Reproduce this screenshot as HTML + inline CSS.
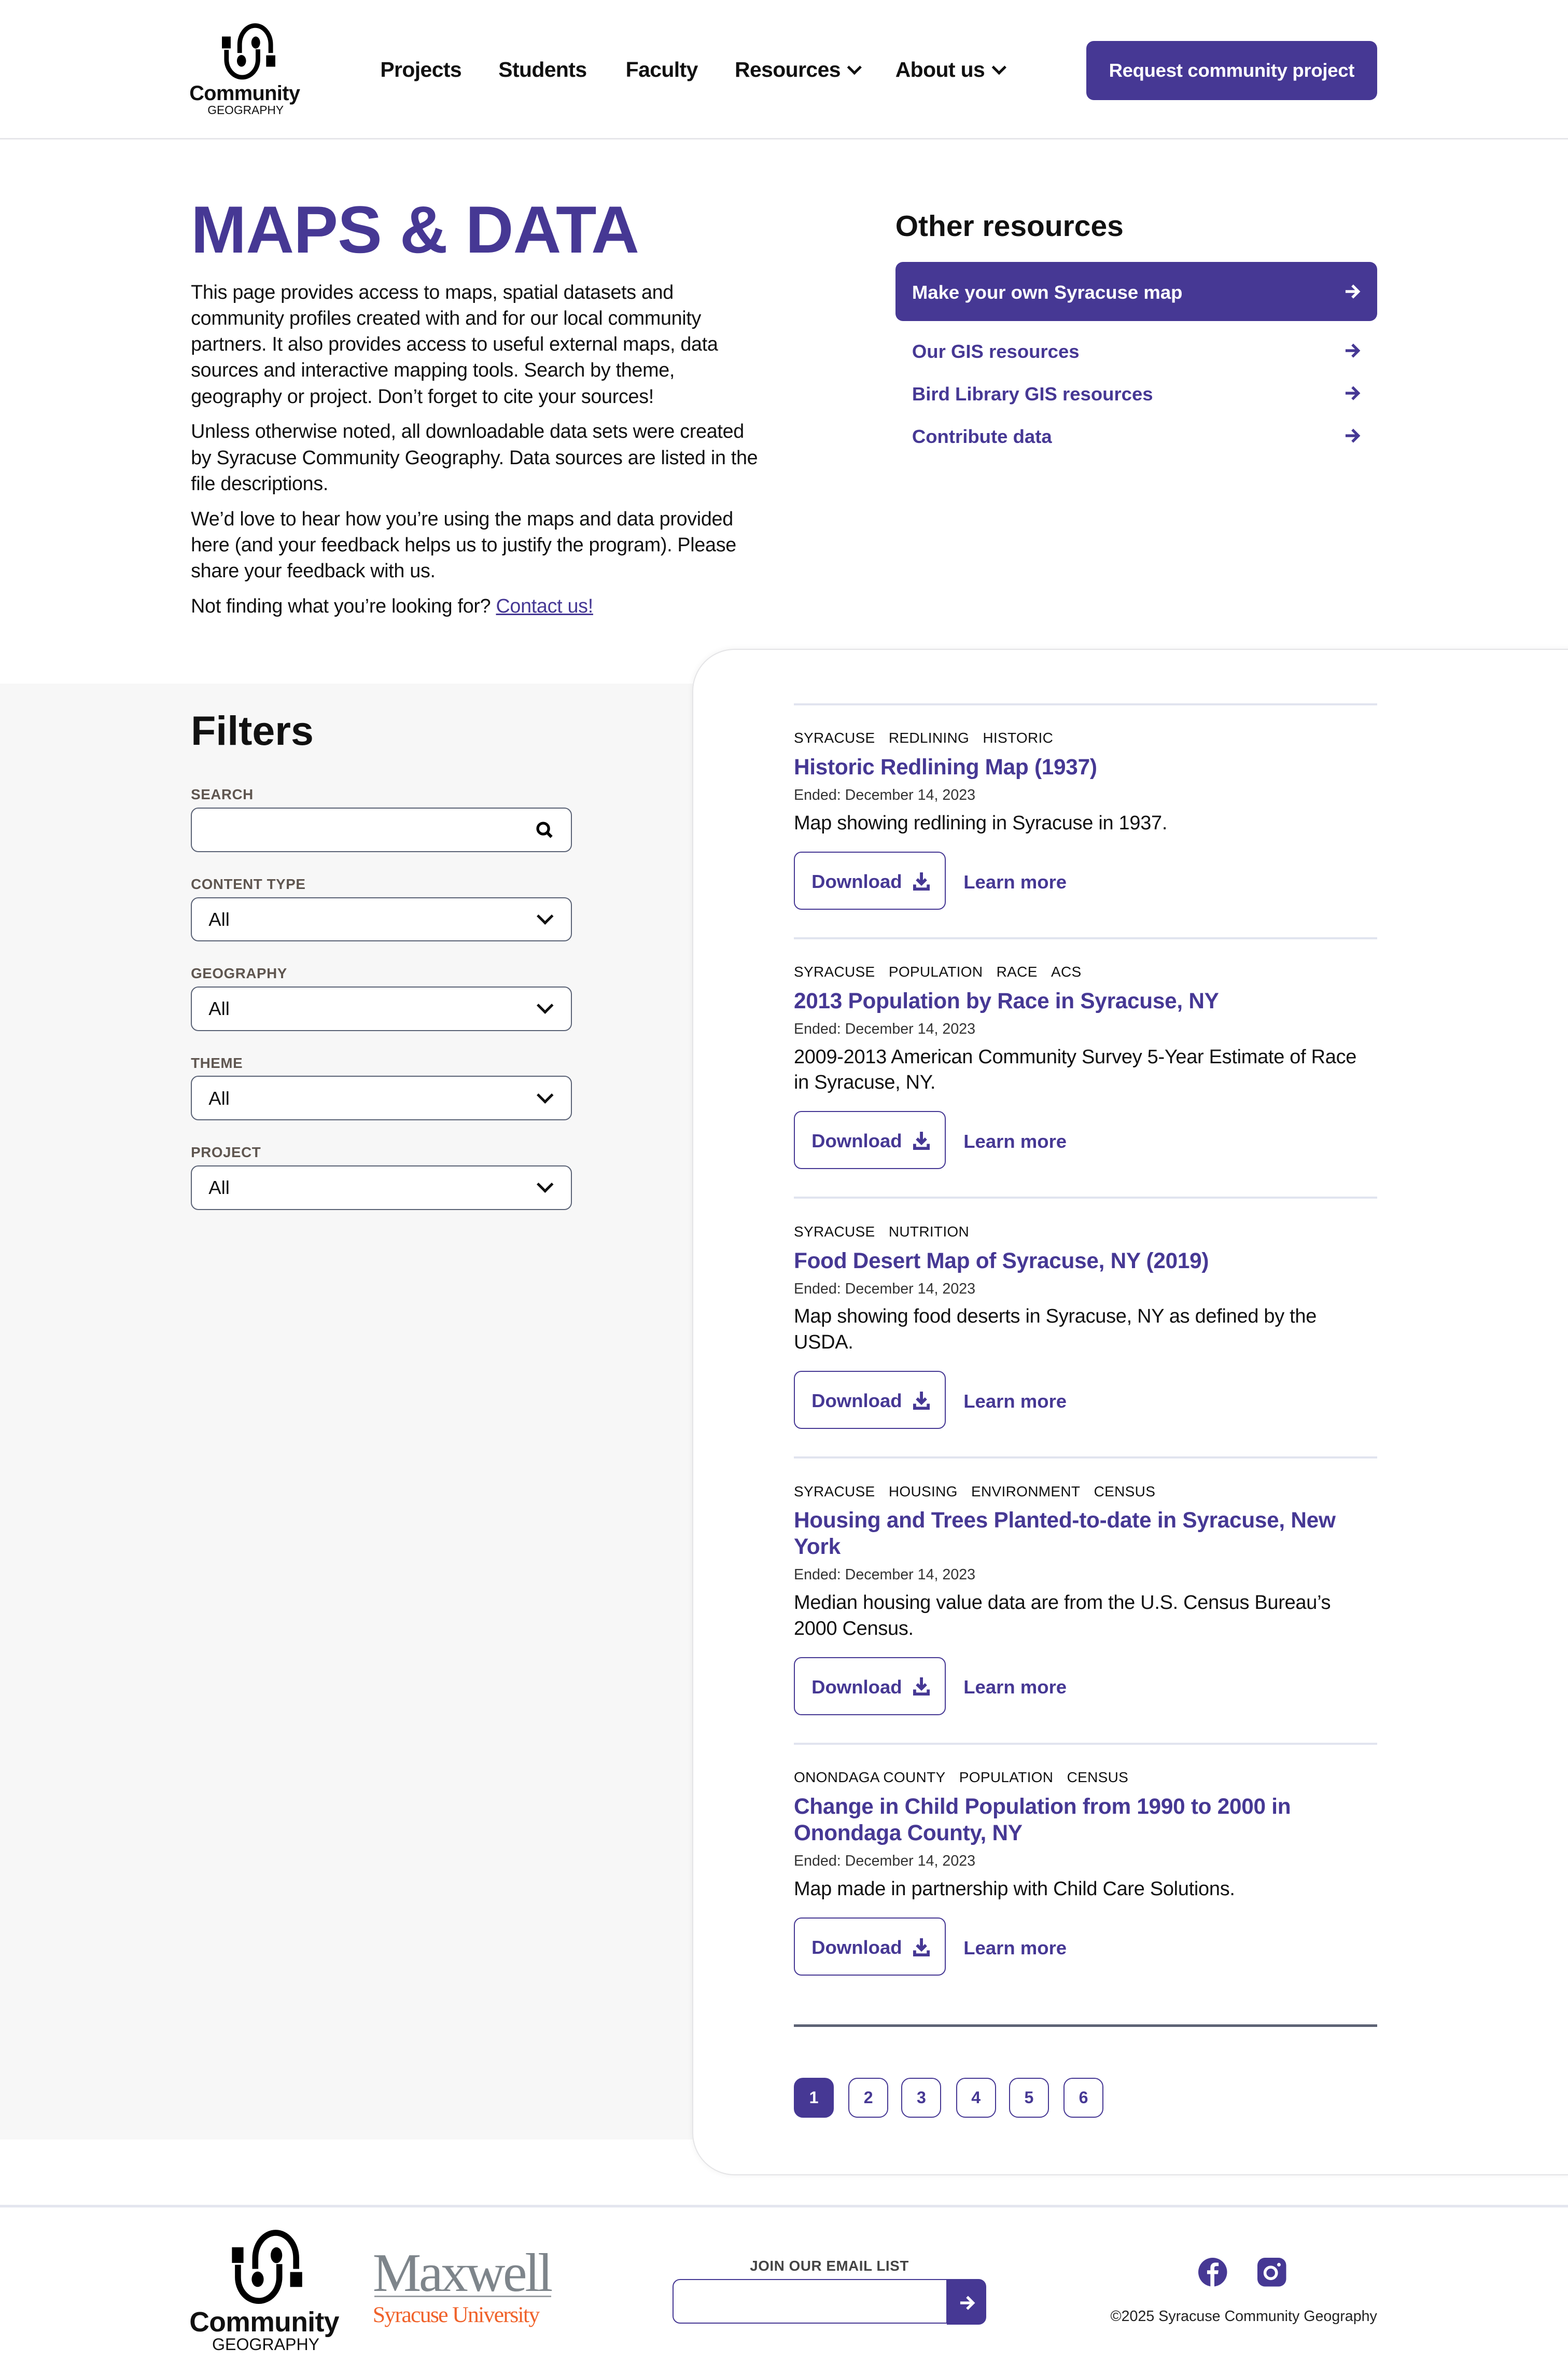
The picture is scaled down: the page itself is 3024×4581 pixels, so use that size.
<!DOCTYPE html>
<html><head><meta charset="utf-8">
<style>
html,body{margin:0;padding:0;background:#fff}
body{width:3024px;height:4581px;overflow:hidden;position:relative}
#w{position:absolute;left:0;top:0;width:1035px;height:1568px;zoom:2.92174;font-family:"Liberation Sans",sans-serif;color:#111}
.a{position:absolute}
.p{color:#463894}
.nav{font-size:14px;font-weight:bold;top:38px;letter-spacing:-0.2px}
.chev{display:inline-block;width:5px;height:5px;border-right:1.8px solid #111;border-bottom:1.8px solid #111;transform:rotate(45deg);margin-left:6px;position:relative;top:-3px}
.intro p{margin:0 0 6px;font-size:12.9px;line-height:17.2px;letter-spacing:-0.1px;white-space:nowrap}
.lbl{font-size:9.5px;font-weight:bold;color:#5f5650;letter-spacing:0.2px}
.box{width:250px;height:28px;border:1px solid #5a6275;border-radius:5px;background:#fff;box-sizing:content-box}
.box span{position:absolute;left:11px;top:7px;font-size:12.5px}
.sel:after{content:"";position:absolute;right:13px;top:8px;width:6px;height:6px;border-right:1.8px solid #111;border-bottom:1.8px solid #111;transform:rotate(45deg)}
.card{border-top:1.5px solid #e1e4ef;padding:15px 0 17.5px;width:385px;white-space:nowrap}
.tags{font-size:9.6px;line-height:14px;letter-spacing:0.1px}
.tags span{margin-right:9px}
.tt{font-size:14.5px;font-weight:bold;color:#463894;line-height:17.5px;margin-top:3px;letter-spacing:-0.1px}
.dt{font-size:9.8px;line-height:14px;margin-top:3px;color:#333}
.ds{font-size:13px;line-height:17px;margin-top:3px;letter-spacing:-0.1px}
.btns{margin-top:10px;height:39px;position:relative}
.dl{position:absolute;left:0;top:0;width:99px;height:37px;border:1px solid #463894;border-radius:5px;color:#463894;font-weight:bold;font-size:12.5px}
.dl b{position:absolute;left:11px;top:12px}
.lm{position:absolute;left:112px;top:13px;color:#463894;font-weight:bold;font-size:12.5px}
.pg{position:absolute;top:1371px;width:25px;height:25px;border:1px solid #463894;border-radius:6px;color:#463894;font-weight:bold;font-size:11px;text-align:center;line-height:25px}
.res{font-size:12.5px;font-weight:bold;color:#463894;left:602px}
.arr{position:absolute;left:887px}
</style></head><body><div id="w">

<svg class="a" style="left:140px;top:15px" width="48" height="38" viewBox="185 140 300 315">
 <rect x="190" y="215" width="48" height="65" fill="#000"/>
 <rect x="432" y="318" width="50" height="62" fill="#000"/>
 <path d="M287 305 L287 260 A85 105 0 0 1 457 260 L457 305" fill="none" stroke="#000" stroke-width="25"/>
 <path d="M215 288 L215 340 A86 98 0 0 0 387 340 L387 285" fill="none" stroke="#000" stroke-width="25"/>
 <ellipse cx="375" cy="248" rx="24" ry="33" fill="#000"/>
 <ellipse cx="297" cy="348" rx="25" ry="32" fill="#000"/>
</svg>
<div class="a" style="left:125px;top:54px;font-size:13.6px;font-weight:bold;letter-spacing:-0.2px">Community</div>
<div class="a" style="left:137px;top:68px;font-size:7.8px">GEOGRAPHY</div>

<div class="a nav" style="left:251px">Projects</div>
<div class="a nav" style="left:329px">Students</div>
<div class="a nav" style="left:413px">Faculty</div>
<div class="a nav" style="left:485px">Resources<i class="chev"></i></div>
<div class="a nav" style="left:591px">About us<i class="chev"></i></div>
<div class="a" style="left:717px;top:27px;width:192px;height:39px;background:#463894;border-radius:5px;color:#fff;font-size:12.5px;font-weight:bold;text-align:center;line-height:39px;letter-spacing:-0.1px">Request community project</div>
<div class="a" style="left:0;top:91px;width:1035px;height:1px;background:#e6e6ea"></div>

<div class="a p" style="left:126px;top:126px;font-size:44px;font-weight:bold;letter-spacing:-0.3px;line-height:52px">MAPS &amp; DATA</div>
<div class="a intro" style="left:126px;top:184px;width:392px">
<p>This page provides access to maps, spatial datasets and<br>community profiles created with and for our local community<br>partners. It also provides access to useful external maps, data<br>sources and interactive mapping tools. Search by theme,<br>geography or project. Don’t forget to cite your sources!</p>
<p>Unless otherwise noted, all downloadable data sets were created<br>by Syracuse Community Geography. Data sources are listed in the<br>file descriptions.</p>
<p>We’d love to hear how you’re using the maps and data provided<br>here (and your feedback helps us to justify the program). Please<br>share your feedback with us.</p>
<p>Not finding what you’re looking for? <span class="p" style="text-decoration:underline">Contact us!</span></p>
</div>

<div class="a" style="left:591px;top:138px;font-size:19.5px;font-weight:bold">Other resources</div>
<div class="a" style="left:591px;top:173px;width:318px;height:39px;background:#463894;border-radius:5px"></div>
<div class="a" style="left:602px;top:186px;color:#fff;font-size:12.5px;font-weight:bold">Make your own Syracuse map</div>
<svg class="a arr" style="top:187px" width="11" height="11" viewBox="0 0 11 11"><path d="M1 5.5 H9.5 M5.5 1.5 L9.5 5.5 L5.5 9.5" fill="none" stroke="#fff" stroke-width="1.8"/></svg>
<div class="a res" style="top:225px">Our GIS resources</div>
<svg class="a arr" style="top:226px" width="11" height="11" viewBox="0 0 11 11"><path d="M1 5.5 H9.5 M5.5 1.5 L9.5 5.5 L5.5 9.5" fill="none" stroke="#463894" stroke-width="1.8"/></svg>
<div class="a res" style="top:253px">Bird Library GIS resources</div>
<svg class="a arr" style="top:254px" width="11" height="11" viewBox="0 0 11 11"><path d="M1 5.5 H9.5 M5.5 1.5 L9.5 5.5 L5.5 9.5" fill="none" stroke="#463894" stroke-width="1.8"/></svg>
<div class="a res" style="top:281px">Contribute data</div>
<svg class="a arr" style="top:282px" width="11" height="11" viewBox="0 0 11 11"><path d="M1 5.5 H9.5 M5.5 1.5 L9.5 5.5 L5.5 9.5" fill="none" stroke="#463894" stroke-width="1.8"/></svg>

<div class="a" style="left:0;top:451px;width:520px;height:961px;background:#f7f7f7"></div>
<div class="a" style="left:457px;top:428px;width:620px;height:1006px;background:#fff;border:1px solid #e4e4e6;border-radius:28px;box-shadow:0 0 4px rgba(0,0,0,0.06)"></div>

<div class="a" style="left:126px;top:467px;font-size:27px;font-weight:bold">Filters</div>
<div class="a lbl" style="left:126px;top:519px">SEARCH</div>
<div class="a box" style="left:126px;top:533px">
 <svg class="a" style="right:11px;top:8px" width="12" height="12" viewBox="0 0 12 12"><circle cx="5" cy="5" r="3.6" fill="none" stroke="#000" stroke-width="1.8"/><path d="M7.6 7.6 L10.5 10.5" stroke="#000" stroke-width="2"/></svg>
</div>
<div class="a lbl" style="left:126px;top:578px">CONTENT TYPE</div>
<div class="a box sel" style="left:126px;top:592px"><span>All</span></div>
<div class="a lbl" style="left:126px;top:637px">GEOGRAPHY</div>
<div class="a box sel" style="left:126px;top:651px"><span>All</span></div>
<div class="a lbl" style="left:126px;top:696px">THEME</div>
<div class="a box sel" style="left:126px;top:710px"><span>All</span></div>
<div class="a lbl" style="left:126px;top:755px">PROJECT</div>
<div class="a box sel" style="left:126px;top:769px"><span>All</span></div>

<div class="a" style="left:524px;top:464px">
<div class="card"><div class="tags"><span>SYRACUSE</span><span>REDLINING</span><span>HISTORIC</span></div>
<div class="tt">Historic Redlining Map (1937)</div><div class="dt">Ended: December 14, 2023</div>
<div class="ds">Map showing redlining in Syracuse in 1937.</div>
<div class="btns"><div class="dl"><b>Download</b><svg class="a" style="left:78px;top:13px" width="11" height="12" viewBox="0 0 11 12"><path d="M5.5 0 V7 M2.5 4.5 L5.5 7.5 L8.5 4.5" fill="none" stroke="#463894" stroke-width="2"/><path d="M0 8 H2 V10 H9 V8 H11 V12 H0Z" fill="#463894"/></svg></div><div class="lm">Learn more</div></div></div>

<div class="card"><div class="tags"><span>SYRACUSE</span><span>POPULATION</span><span>RACE</span><span>ACS</span></div>
<div class="tt">2013 Population by Race in Syracuse, NY</div><div class="dt">Ended: December 14, 2023</div>
<div class="ds">2009-2013 American Community Survey 5-Year Estimate of Race<br>in Syracuse, NY.</div>
<div class="btns"><div class="dl"><b>Download</b><svg class="a" style="left:78px;top:13px" width="11" height="12" viewBox="0 0 11 12"><path d="M5.5 0 V7 M2.5 4.5 L5.5 7.5 L8.5 4.5" fill="none" stroke="#463894" stroke-width="2"/><path d="M0 8 H2 V10 H9 V8 H11 V12 H0Z" fill="#463894"/></svg></div><div class="lm">Learn more</div></div></div>

<div class="card"><div class="tags"><span>SYRACUSE</span><span>NUTRITION</span></div>
<div class="tt">Food Desert Map of Syracuse, NY (2019)</div><div class="dt">Ended: December 14, 2023</div>
<div class="ds">Map showing food deserts in Syracuse, NY as defined by the<br>USDA.</div>
<div class="btns"><div class="dl"><b>Download</b><svg class="a" style="left:78px;top:13px" width="11" height="12" viewBox="0 0 11 12"><path d="M5.5 0 V7 M2.5 4.5 L5.5 7.5 L8.5 4.5" fill="none" stroke="#463894" stroke-width="2"/><path d="M0 8 H2 V10 H9 V8 H11 V12 H0Z" fill="#463894"/></svg></div><div class="lm">Learn more</div></div></div>

<div class="card"><div class="tags"><span>SYRACUSE</span><span>HOUSING</span><span>ENVIRONMENT</span><span>CENSUS</span></div>
<div class="tt">Housing and Trees Planted-to-date in Syracuse, New<br>York</div><div class="dt">Ended: December 14, 2023</div>
<div class="ds">Median housing value data are from the U.S. Census Bureau’s<br>2000 Census.</div>
<div class="btns"><div class="dl"><b>Download</b><svg class="a" style="left:78px;top:13px" width="11" height="12" viewBox="0 0 11 12"><path d="M5.5 0 V7 M2.5 4.5 L5.5 7.5 L8.5 4.5" fill="none" stroke="#463894" stroke-width="2"/><path d="M0 8 H2 V10 H9 V8 H11 V12 H0Z" fill="#463894"/></svg></div><div class="lm">Learn more</div></div></div>

<div class="card"><div class="tags"><span>ONONDAGA COUNTY</span><span>POPULATION</span><span>CENSUS</span></div>
<div class="tt">Change in Child Population from 1990 to 2000 in<br>Onondaga County, NY</div><div class="dt">Ended: December 14, 2023</div>
<div class="ds">Map made in partnership with Child Care Solutions.</div>
<div class="btns"><div class="dl"><b>Download</b><svg class="a" style="left:78px;top:13px" width="11" height="12" viewBox="0 0 11 12"><path d="M5.5 0 V7 M2.5 4.5 L5.5 7.5 L8.5 4.5" fill="none" stroke="#463894" stroke-width="2"/><path d="M0 8 H2 V10 H9 V8 H11 V12 H0Z" fill="#463894"/></svg></div><div class="lm">Learn more</div></div></div>
</div>

<div class="a" style="left:524px;top:1336px;width:385px;height:1.5px;background:#5d6375"></div>
<div class="pg" style="left:524px;background:#463894;color:#fff">1</div>
<div class="pg" style="left:560px">2</div>
<div class="pg" style="left:595px">3</div>
<div class="pg" style="left:631px">4</div>
<div class="pg" style="left:666px">5</div>
<div class="pg" style="left:702px">6</div>

<div class="a" style="left:0;top:1455px;width:1035px;height:1.5px;background:#e4e6ef"></div>
<svg class="a" style="left:145px;top:1471px" width="62" height="50" viewBox="185 140 300 315">
 <rect x="190" y="215" width="48" height="65" fill="#000"/>
 <rect x="432" y="318" width="50" height="62" fill="#000"/>
 <path d="M287 305 L287 260 A85 105 0 0 1 457 260 L457 305" fill="none" stroke="#000" stroke-width="25"/>
 <path d="M215 288 L215 340 A86 98 0 0 0 387 340 L387 285" fill="none" stroke="#000" stroke-width="25"/>
 <ellipse cx="375" cy="248" rx="24" ry="33" fill="#000"/>
 <ellipse cx="297" cy="348" rx="25" ry="32" fill="#000"/>
</svg>
<div class="a" style="left:125px;top:1522px;font-size:18.3px;font-weight:bold;letter-spacing:-0.2px">Community</div>
<div class="a" style="left:140px;top:1541px;font-size:11px">GEOGRAPHY</div>
<div class="a" style="left:246px;top:1480px;font-family:'Liberation Serif',serif;font-size:36px;color:#7e858b;letter-spacing:-1.5px;line-height:40px">Maxwell</div>
<div class="a" style="left:247px;top:1515px;width:117px;height:1px;background:#9a9fa4"></div>
<div class="a" style="left:246px;top:1519px;font-family:'Liberation Serif',serif;font-size:15px;color:#f0622a;letter-spacing:-0.6px">Syracuse University</div>

<div class="a lbl" style="left:495px;top:1490px;color:#444">JOIN OUR EMAIL LIST</div>
<div class="a" style="left:444px;top:1504px;width:180px;height:28px;border:1px solid #463894;border-radius:5px 0 0 5px"></div>
<div class="a" style="left:625px;top:1504px;width:26px;height:30px;background:#463894;border-radius:0 5px 5px 0"></div>
<svg class="a" style="left:633px;top:1514px" width="11" height="11" viewBox="0 0 11 11"><path d="M1 5.5 H9.5 M5.5 1.5 L9.5 5.5 L5.5 9.5" fill="none" stroke="#fff" stroke-width="1.8"/></svg>

<svg class="a" style="left:791px;top:1490px" width="19" height="19" viewBox="0 0 19 19"><circle cx="9.5" cy="9.5" r="9.5" fill="#463894"/><path d="M10.6 19 V10.8 H13 L13.3 8.3 H10.6 V6.8 C10.6 6 10.9 5.5 12 5.5 H13.4 V3.3 C12.8 3.2 12.1 3.2 11.4 3.2 C9.4 3.2 8 4.4 8 6.5 V8.3 H5.8 V10.8 H8 V19Z" fill="#fff"/></svg>
<svg class="a" style="left:830px;top:1490px" width="19" height="19" viewBox="0 0 19 19"><rect width="19" height="19" rx="5" fill="#463894"/><circle cx="8.8" cy="10" r="3.8" fill="none" stroke="#fff" stroke-width="1.9"/><circle cx="14.2" cy="4.6" r="1.2" fill="#fff"/></svg>
<div class="a" style="left:711px;top:1523px;font-size:9.8px;color:#222;width:198px;text-align:right">©2025 Syracuse Community Geography</div>

</div></body></html>
